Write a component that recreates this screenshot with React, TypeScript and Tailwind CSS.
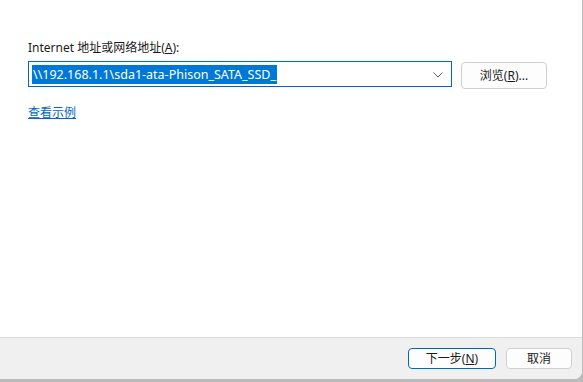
import React from "react";

export default function App() {
  const font = { fontFamily: '"Noto Sans", "Noto Sans CJK SC", sans-serif' };
  return (
    <div className="w-[583px] h-[382px] bg-[#bcbcbc] overflow-hidden flex flex-col text-[12px] text-[#1a1a1a]" style={font}>
      <div className="flex-1 bg-white rounded-br-[8px] flex flex-col mr-[1px] mb-[3px] overflow-hidden">
        <div className="h-[337px] flex flex-col pl-[28px]">
          <div className="mt-[40px] h-[16px] leading-[16px]">
            Internet 地址或网络地址(<span className="underline">A</span>):
          </div>
          <div className="flex mt-[5px] items-start">
            <div className="w-[424px] h-[26px] border border-[#0067c0] bg-white flex items-center pl-[3px] pr-[8px]">
              <span className="bg-[#0078d7] text-white h-[19px] leading-[19px] px-[1px] whitespace-nowrap text-[12.5px]">
                \\192.168.1.1\sda1-ata-Phison_SATA_SSD_
              </span>
              <div className="flex-1" />
              <svg width="10" height="6" viewBox="0 0 10 6" className="mt-[1px]">
                <path d="M0.5 0.5 L5 5 L9.5 0.5" fill="none" stroke="#606060" strokeWidth="1" />
              </svg>
            </div>
            <div className="ml-[9px] mt-[1px] w-[86px] h-[27px] rounded-[4px] border border-[#d0d0d0] bg-[#fdfdfd] flex items-center justify-center">
              浏览(<span className="underline">R</span>)...
            </div>
          </div>
          <div className="mt-[16px] text-[#0066cc] underline leading-[16px]">查看示例</div>
        </div>
        <div className="flex-1 bg-[#f0f0f0] border-t border-[#dcdcdc] flex justify-end items-start pt-[10px] pr-[10px] gap-[10px]">
          <div className="w-[88px] h-[21px] rounded-[4px] border border-[#0067c0] bg-[#fdfdfd] flex items-center justify-center">
            下一步(<span className="underline">N</span>)
          </div>
          <div className="w-[66px] h-[21px] rounded-[4px] border border-[#d0d0d0] bg-[#fdfdfd] flex items-center justify-center">
            取消
          </div>
        </div>
      </div>
    </div>
  );
}
